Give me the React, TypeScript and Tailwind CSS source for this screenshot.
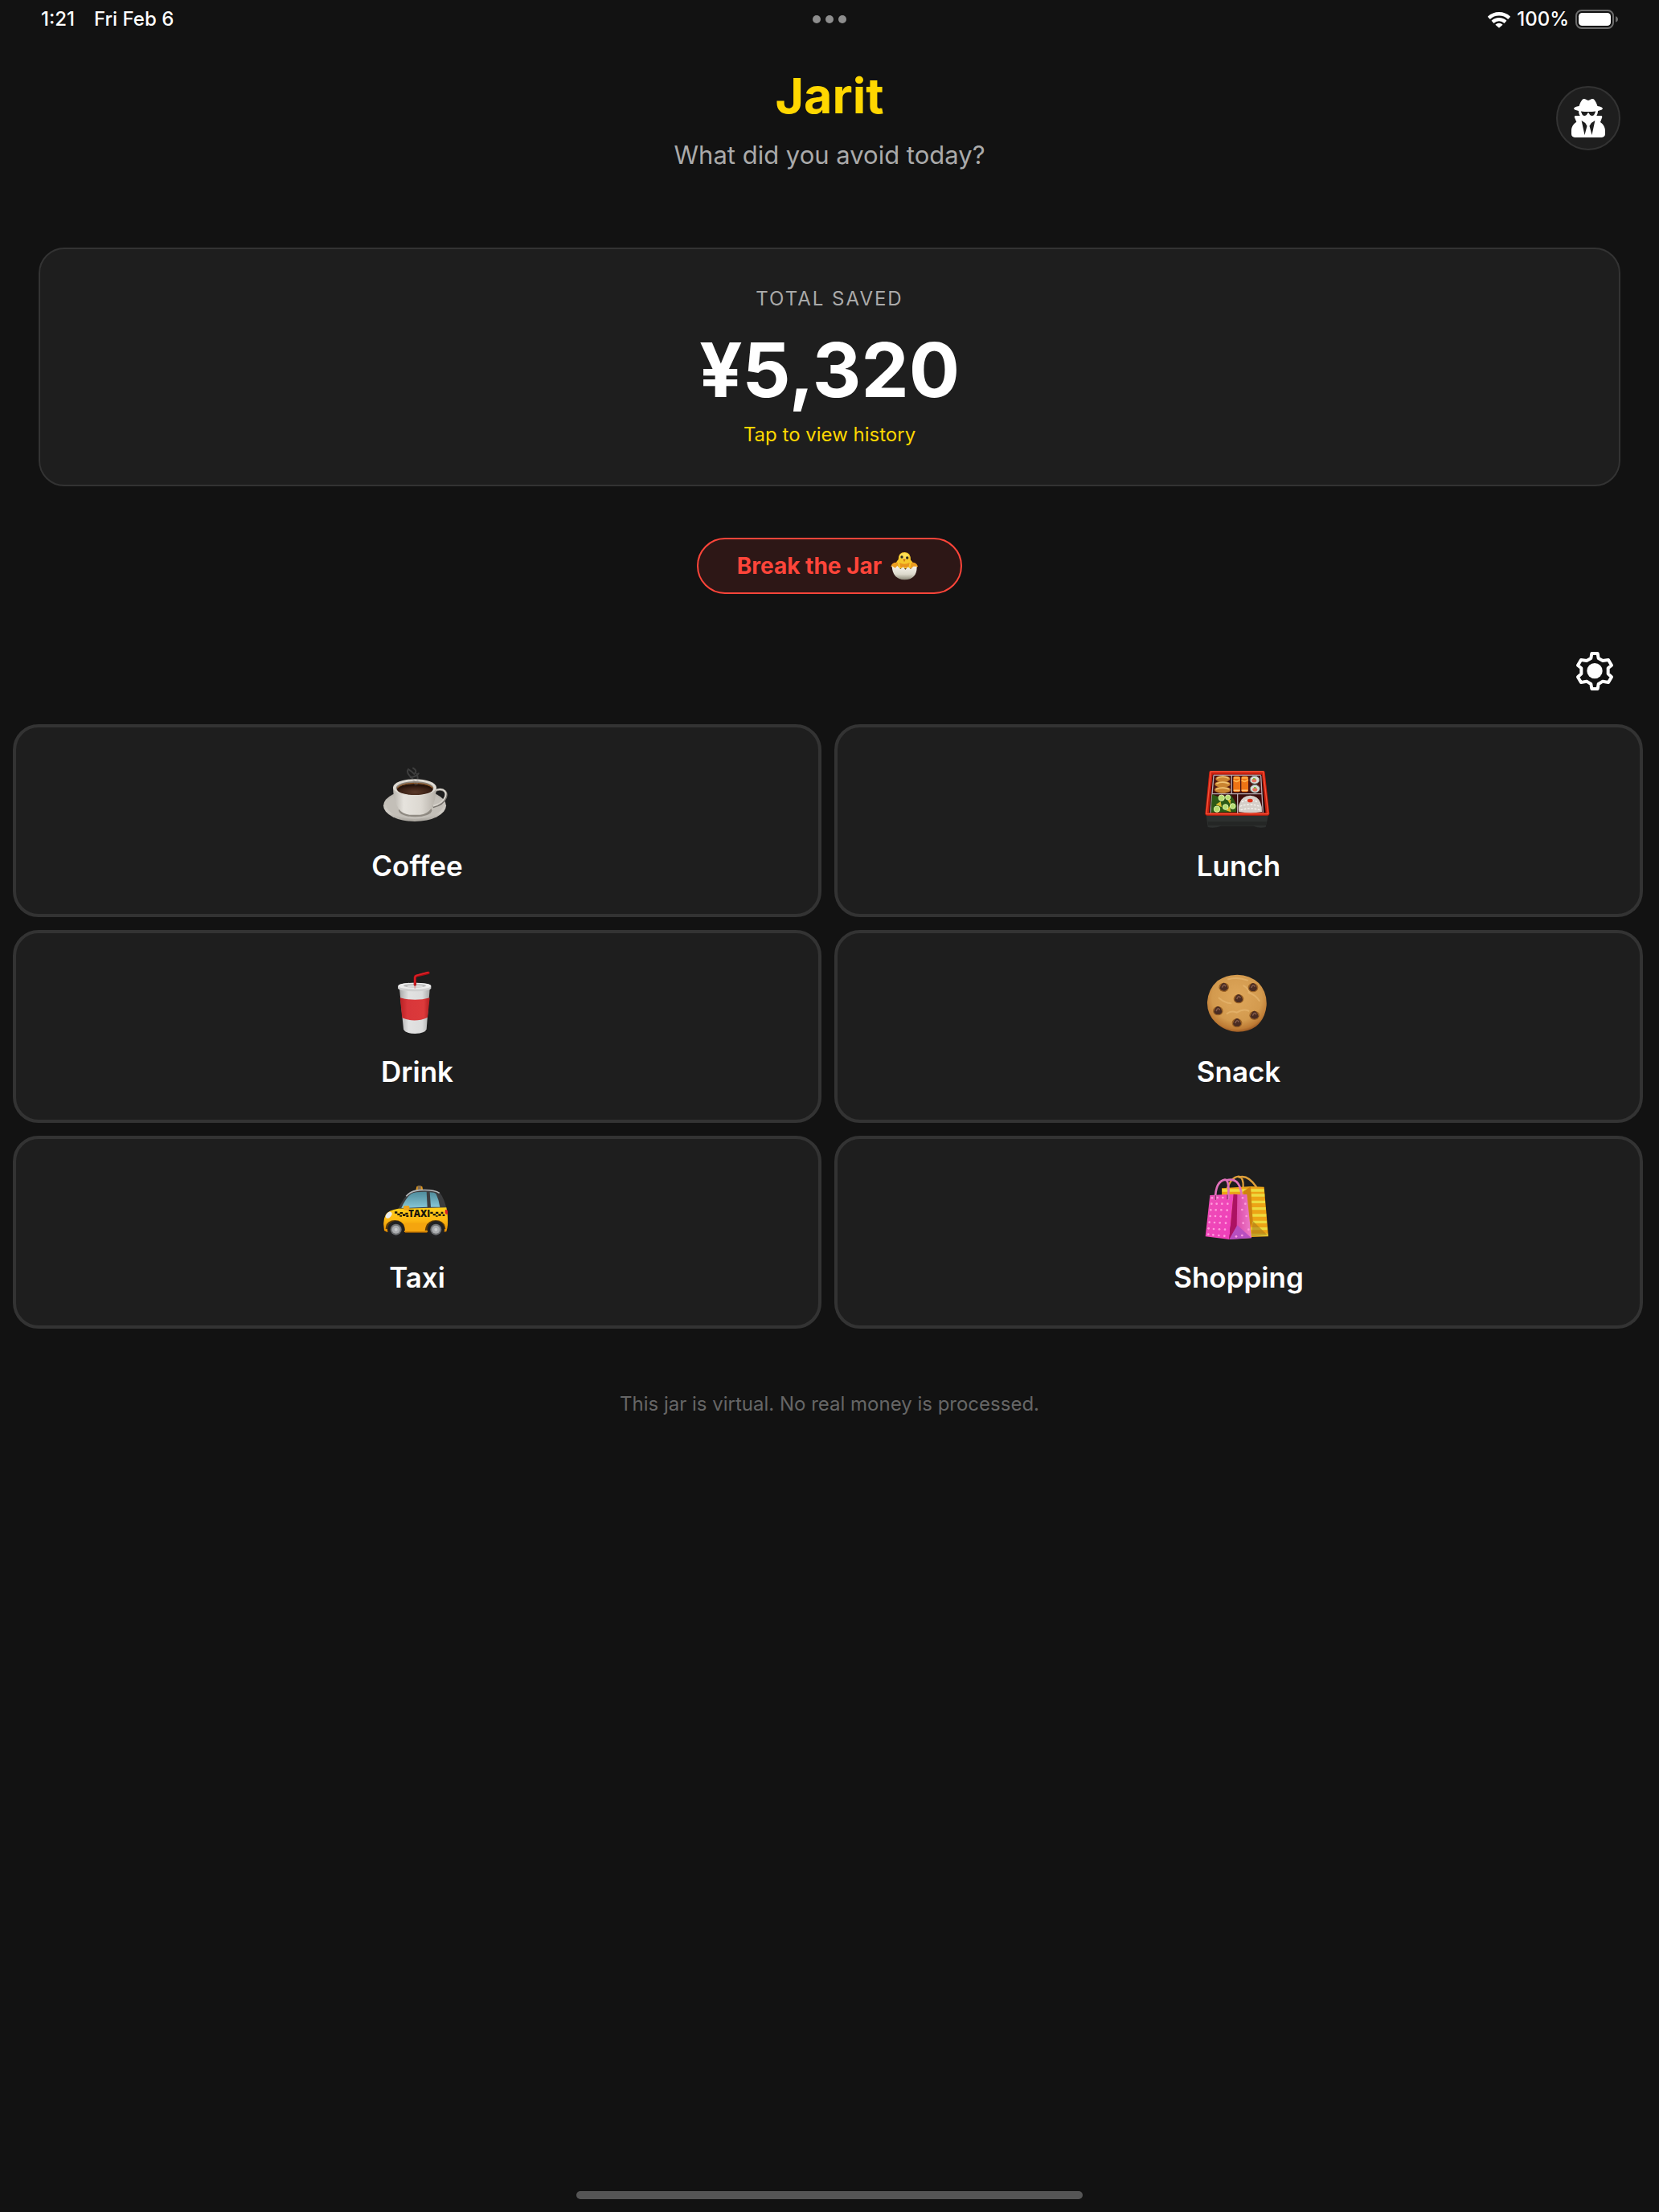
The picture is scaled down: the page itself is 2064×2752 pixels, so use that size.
import type { ReactNode } from "react";
import { FaUserSecret } from "react-icons/fa";

function CoffeeArt() {
  return (
    <svg viewBox="105 18 264 264" className="size-[88px]" aria-hidden="true">
      <defs>
        <linearGradient id="cupBody" x1="0" x2="1" y1="0" y2="0">
          <stop offset="0" stopColor="#b9b5ae" />
          <stop offset="0.25" stopColor="#e6e3dd" />
          <stop offset="0.65" stopColor="#dcd8d1" />
          <stop offset="1" stopColor="#b5b0a8" />
        </linearGradient>
        <linearGradient id="saucer" x1="0" x2="0" y1="0" y2="1">
          <stop offset="0" stopColor="#b3afa8" />
          <stop offset="0.7" stopColor="#d0ccc5" />
          <stop offset="1" stopColor="#a8a49d" />
        </linearGradient>
        <radialGradient id="brew" cx="0.5" cy="0.75" r="0.6">
          <stop offset="0" stopColor="#5b3a2a" />
          <stop offset="0.7" stopColor="#3a2014" />
          <stop offset="1" stopColor="#24120a" />
        </radialGradient>
      </defs>
      <ellipse cx="228" cy="190" rx="117" ry="59" fill="url(#saucer)" />
      <ellipse cx="228" cy="188" rx="106" ry="51" fill="#c3bfb8" />
      <ellipse cx="230" cy="208" rx="62" ry="24" fill="#8f8a82" />
      <path d="M300 138Q316 126 334 132Q350 140 344 158Q334 186 296 194" fill="none" stroke="#77736d" strokeWidth="9" />
      <path d="M300 136Q316 125 333 131Q348 139 342 156Q332 183 296 191" fill="none" stroke="#d8d4cd" strokeWidth="6" />
      <path d="M147 122Q147 168 168 202Q182 222 208 224H248Q274 222 290 200Q308 168 308 122Z" fill="url(#cupBody)" />
      <ellipse cx="228" cy="122" rx="81" ry="31" fill="#dedad3" />
      <ellipse cx="228" cy="124" rx="70" ry="25" fill="#8b8278" />
      <ellipse cx="229" cy="129" rx="67" ry="21" fill="url(#brew)" />
      <path d="M163 124Q180 106 229 106Q278 106 295 124" fill="none" stroke="#8a5222" strokeWidth="4" />
      <path d="M230 112Q226 92 210 80Q196 66 204 54Q218 62 226 72Q240 60 222 50M236 110Q242 88 236 72M212 84Q234 82 242 70" fill="none" stroke="#8c8c8c" strokeOpacity="0.3" strokeWidth="6" strokeLinecap="round" />
    </svg>
  );
}

function BentoArt() {
  return (
    <svg viewBox="111 18 264 264" className="size-[88px]" aria-hidden="true">
      <path d="M122 226L128 270Q150 276 178 266H298Q320 276 344 270L354 226Z" fill="#2d302f" />
      <path d="M128 250L130 264H344L348 250Z" fill="#242625" />
      <path d="M138 60H336Q340 60 341 65L358 220Q358 227 351 227H125Q118 227 118 220L133 65Q134 60 138 60Z" fill="#c81e0e" />
      <path d="M139 63H335L353 218Q353 221 350 221H126Q122 221 123 218Z" fill="none" stroke="#f4553a" strokeWidth="4" />
      <path d="M146 74H330L344 216H132Z" fill="#2a0b0a" />
      <path d="M152 78H214V142H146ZM221 78H324L328 142H221Z" fill="#4d1512" />
      <path d="M144 149H236V216H137ZM242 149H328L334 216H242Z" fill="#3c0d0c" />
      <path d="M150 76L138 217M217 76V145M239 145V218M326 78L334 216M142 146H330M150 76H326" fill="none" stroke="#b9a9b0" strokeWidth="4" />
      <g fill="#c98431">
        <ellipse cx="184" cy="90" rx="27" ry="12" />
        <ellipse cx="183" cy="110" rx="29" ry="12" />
        <ellipse cx="183" cy="131" rx="30" ry="12" />
      </g>
      <g fill="none" stroke="#f0c374" strokeWidth="5" strokeLinecap="round">
        <path d="M164 87Q184 78 204 87M162 107Q183 98 204 107M160 128Q183 119 206 128" />
      </g>
      <g fill="#ee7415">
        <rect x="223" y="80" width="26" height="59" rx="8" />
        <rect x="253" y="80" width="26" height="59" rx="8" />
      </g>
      <path d="M226 96Q236 104 246 94M256 96Q266 104 277 94M227 86H245M257 86H275" fill="none" stroke="#ffb04a" strokeWidth="6" strokeLinecap="round" />
      <path d="M226 133H246M256 133H276" stroke="#ffc277" strokeWidth="5" strokeLinecap="round" />
      <g fill="#d9dfdc" stroke="#5b655f" strokeWidth="3">
        <ellipse cx="303" cy="94" rx="18" ry="15" />
        <ellipse cx="304" cy="127" rx="18" ry="15" />
      </g>
      <g fill="#e5735e">
        <ellipse cx="301" cy="96" rx="9" ry="7" />
        <ellipse cx="304" cy="130" rx="9" ry="7" />
      </g>
      <path d="M297 90h8M300 123h8" stroke="#86b83c" strokeWidth="6" />
      <path d="M144 148L166 156L214 150L226 168L236 190L234 214L140 216Z" fill="#2c5a16" />
      <g fill="#d9bb2e">
        <path d="M158 186L176 174L180 196ZM200 166L214 168L212 186ZM196 208L210 192L214 214Z" />
      </g>
      <g fill="#b5dd70" stroke="#e3f3b0" strokeWidth="3">
        <circle cx="179" cy="161" r="11" />
        <circle cx="203" cy="159" r="9" />
        <circle cx="162" cy="203" r="11" />
        <circle cx="194" cy="195" r="10" />
        <circle cx="221" cy="192" r="10" />
      </g>
      <path d="M244 214Q240 192 248 178Q256 154 286 152Q316 154 324 178Q332 196 330 214Q288 220 244 214Z" fill="#d5cfc9" />
      <g fill="none" stroke="#f6f3ef" strokeWidth="4" strokeLinecap="round" strokeDasharray="5 8">
        <path d="M256 176Q280 160 318 178M250 192Q286 178 324 194M252 206Q290 194 326 208" />
      </g>
      <ellipse cx="286" cy="171" rx="10" ry="7" fill="#e2331c" />
    </svg>
  );
}

function DrinkArt() {
  return (
    <svg viewBox="105 36 264 264" className="size-[88px]" aria-hidden="true">
      <defs>
        <linearGradient id="paperCup" x1="0" x2="1" y1="0" y2="0">
          <stop offset="0" stopColor="#a9a9a9" />
          <stop offset="0.3" stopColor="#e2e2e2" />
          <stop offset="0.75" stopColor="#dcdcdc" />
          <stop offset="1" stopColor="#a8a8a8" />
        </linearGradient>
        <linearGradient id="sleeve" x1="0" x2="1" y1="0" y2="0">
          <stop offset="0" stopColor="#b82023" />
          <stop offset="0.25" stopColor="#d8363a" />
          <stop offset="0.8" stopColor="#dc3a3b" />
          <stop offset="1" stopColor="#b11d20" />
        </linearGradient>
      </defs>
      <path d="M171 124L186 274Q190 290 229 291Q268 290 272 274L284 124Z" fill="url(#paperCup)" />
      <path d="M173 157Q229 172 284 157L276 230Q229 252 181 232Z" fill="url(#sleeve)" />
      <path d="M165 114Q167 102 228 101Q286 102 289 114V122Q284 132 228 133Q170 132 165 122Z" fill="#cfcfcf" />
      <ellipse cx="228" cy="113" rx="61" ry="12" fill="#ececec" />
      <ellipse cx="228" cy="112" rx="42" ry="7" fill="#b9b9b9" />
      <ellipse cx="229" cy="114" rx="30" ry="5" fill="#dadada" />
      <path d="M229 109V82Q229 76 236 75L279 64" fill="none" stroke="#a90d12" strokeWidth="10" strokeLinecap="round" strokeLinejoin="round" />
      <path d="M228 107V82Q229 75 236 73L278 62" fill="none" stroke="#da2027" strokeWidth="5" strokeLinecap="round" />
      <path d="M229 112V122" stroke="#d9a3a3" strokeWidth="6" />
    </svg>
  );
}

function Chip({ x, y }: { x: number; y: number }) {
  return (
    <g>
      <ellipse cx={x} cy={y + 2} rx="19" ry="17" fill="#9a6226" />
      <path d={`M${x - 15} ${y + 5}Q${x - 10} ${y - 14} ${x} ${y - 15}Q${x + 11} ${y - 13} ${x + 15} ${y + 5}Q${x + 12} ${y + 15} ${x} ${y + 15}Q${x - 12} ${y + 15} ${x - 15} ${y + 5}Z`} fill="#4a2c22" />
      <path d={`M${x - 6} ${y + 1}Q${x} ${y - 12} ${x + 6} ${y - 3}`} fill="none" stroke="#80594a" strokeWidth="5" strokeLinecap="round" />
    </g>
  );
}

function CookieArt() {
  return (
    <svg viewBox="111 36 264 264" className="size-[88px]" aria-hidden="true">
      <defs>
        <radialGradient id="cookie" cx="0.5" cy="0.4" r="0.6">
          <stop offset="0" stopColor="#dea75b" />
          <stop offset="0.7" stopColor="#d39a4e" />
          <stop offset="0.92" stopColor="#bd7a34" />
          <stop offset="1" stopColor="#9c5a24" />
        </radialGradient>
      </defs>
      <path d="M238 71Q286 72 318 102Q350 136 347 186Q342 236 308 264Q276 286 236 284Q190 282 158 250Q124 218 126 172Q130 124 164 94Q196 71 238 71Z" fill="url(#cookie)" />
      <path d="M204 88Q240 78 276 92M280 138Q306 146 320 168M170 158Q190 176 214 178M200 216Q214 204 236 212Q262 196 280 206M262 112Q280 122 284 140" fill="none" stroke="#eabb74" strokeOpacity="0.6" strokeWidth="6" strokeLinecap="round" />
      <Chip x={188} y={116} />
      <Chip x={297} y={117} />
      <Chip x={243} y={159} />
      <Chip x={166} y={204} />
      <Chip x={302} y={221} />
      <Chip x={237} y={249} />
    </svg>
  );
}

function TaxiArt() {
  return (
    <svg viewBox="105 24 264 264" className="size-[88px]" aria-hidden="true">
      <defs>
        <linearGradient id="taxiBody" x1="0" x2="0" y1="0" y2="1">
          <stop offset="0" stopColor="#ffcf1a" />
          <stop offset="0.5" stopColor="#fdb813" />
          <stop offset="1" stopColor="#e58a00" />
        </linearGradient>
        <linearGradient id="taxiGlass" x1="0" x2="0" y1="0" y2="1">
          <stop offset="0" stopColor="#4f8c9c" />
          <stop offset="1" stopColor="#86c6d6" />
        </linearGradient>
      </defs>
      <path d="M232 96L235 82Q245 76 256 82L259 96Z" fill="#e59a1b" />
      <rect x="239" y="79" width="12" height="16" rx="3" fill="#806c54" />
      <path d="M164 170Q184 124 210 102Q226 92 262 92Q306 92 322 104Q340 130 348 170Z" fill="#3b3c3e" />
      <path d="M196 118Q212 98 246 95Q300 92 320 106" fill="none" stroke="#b3b6b8" strokeWidth="5" />
      <path d="M178 162Q196 122 216 108Q230 100 272 101L275 158Z" fill="url(#taxiGlass)" />
      <path d="M284 103Q302 103 308 110Q318 130 322 158H288Z" fill="url(#taxiGlass)" />
      <path d="M112 226Q110 204 120 186Q130 170 166 164L346 160Q352 186 351 210Q352 232 346 250Q320 254 300 252H150Q126 256 114 246Z" fill="url(#taxiBody)" />
      <path d="M190 218H274V250H190Z" fill="#f5a50e" />
      <path d="M192 252H274" stroke="#b56b00" strokeWidth="4" />
      <rect x="186" y="153" width="22" height="17" rx="5" fill="#eda51b" />
      <ellipse cx="131" cy="188" rx="9" ry="14" transform="rotate(42 131 188)" fill="#e9ecee" />
      <path d="M342 168Q351 166 351 176L350 186Q342 186 341 178Z" fill="#dc2127" />
      <g fill="#19160c">
        <path d="M153 175h10v7h-10zM173 177h10v7h-10zM193 179h10v7h-10zM163 182h10v7h-10zM183 184h10v8h-10zM172 189h8v5h-8zM196 188h9v7h-9z" />
        <path d="M286 176h10v7h-10zM306 176h10v7h-10zM326 176h8v7h-8zM296 183h10v7h-10zM316 184h10v7h-10zM332 185h8v7h-8zM306 190h8v4h-8z" />
      </g>
      <text x="245" y="196" textAnchor="middle" fontFamily="Open Sans, sans-serif" fontWeight="800" fontSize="34" fill="#19160c">TAXI</text>
      <path d="M119 240Q120 208 154 207Q190 208 192 246ZM266 246Q270 208 306 207Q340 208 343 240Z" fill="#5c3b08" />
      {[158, 307].map((cx) => (
        <g key={cx}>
          <circle cx={cx} cy="242" r="32" fill="#202022" />
          <circle cx={cx} cy="242" r="21" fill="#6f7174" />
          <circle cx={cx} cy="242" r="15" fill="#a9abae" />
          <circle cx={cx} cy="242" r="6" fill="#c9cbcd" />
        </g>
      ))}
    </svg>
  );
}

function BagsArt() {
  const dots = [
    [174, 124], [194, 123], [214, 123], [234, 122],
    [172, 146], [191, 146], [211, 146], [232, 146],
    [169, 169], [188, 169], [208, 169], [230, 170],
    [167, 192], [186, 192], [206, 193], [227, 194],
    [164, 215], [183, 216], [203, 217], [225, 218],
    [161, 238], [180, 240], [201, 241], [222, 242],
    [160, 260], [178, 262], [199, 264], [220, 266],
    [288, 124], [298, 146], [286, 168], [302, 192], [290, 218], [310, 242], [286, 264], [264, 268],
  ];
  return (
    <svg viewBox="141 24 264 264" className="size-[88px]" aria-hidden="true">
      <defs>
        <linearGradient id="pinkFront" x1="0" x2="1" y1="0" y2="1">
          <stop offset="0" stopColor="#ee4fb6" />
          <stop offset="1" stopColor="#f03dbb" />
        </linearGradient>
        <linearGradient id="pinkSide" x1="0" x2="1" y1="0" y2="0">
          <stop offset="0" stopColor="#b3186f" />
          <stop offset="0.35" stopColor="#dc4ba8" />
          <stop offset="1" stopColor="#ee7cc9" />
        </linearGradient>
      </defs>
      <path d="M210 88L318 81L368 83L384 268L320 270L212 200Z" fill="#eda416" />
      <path d="M212 96H368M320 114H370M320 139H372M320 164H374M320 189H376M320 214H378M320 239H380M320 262H382" stroke="#eddb3f" strokeWidth="10" />
      <path d="M318 82L326 212L316 240L290 100Z" fill="#cf8210" />
      <path d="M326 210L382 264L320 268Z" fill="#a87c18" fillOpacity="0.6" />
      <path d="M230 92Q244 46 274 44Q292 48 290 84M272 48Q306 34 340 84" fill="none" stroke="#e0a03a" strokeWidth="7" />
      <path d="M166 114L254 110L238 279L149 268Z" fill="url(#pinkFront)" />
      <path d="M254 110L304 111L321 274L238 279Z" fill="url(#pinkSide)" />
      <path d="M254 110L268 112L266 230L238 279Z" fill="#ad1263" />
      <path d="M268 226L320 273L238 279Z" fill="#b74fc0" />
      <g fill="#ff9bdc">
        {dots.map(([cx, cy]) => (
          <circle key={`${cx}-${cy}`} cx={cx} cy={cy} r="4" />
        ))}
      </g>
      <path d="M186 130Q186 62 222 56Q240 56 234 128M228 58Q276 44 284 112" fill="none" stroke="#e070b9" strokeWidth="8" strokeLinecap="round" />
      <path d="M187 116V130M231 114V128" stroke="#8e2a69" strokeWidth="4" strokeLinecap="round" />
    </svg>
  );
}

function ChickArt() {
  return (
    <svg viewBox="802 108 108 108" className="-my-px size-9" aria-hidden="true">
      <defs>
        <linearGradient id="shell" x1="0" x2="0" y1="0" y2="1">
          <stop offset="0" stopColor="#f7f5ee" />
          <stop offset="0.6" stopColor="#dcd9cc" />
          <stop offset="1" stopColor="#8f8c7c" />
        </linearGradient>
      </defs>
      <path d="M834 138Q834 111 858 111Q880 112 880 140Q892 150 896 172H820Q822 150 834 138Z" fill="#f6c72b" />
      <path d="M806 164Q812 146 832 150L836 172Q818 174 806 164ZM907 164Q900 146 882 150L878 172Q896 174 907 164Z" fill="#eb9d20" />
      <path d="M838 150Q856 160 876 150L872 168H842Z" fill="#e8941c" />
      <ellipse cx="856" cy="126" rx="17" ry="12" fill="#ffdf55" />
      <path d="M810 162L822 170L830 162L842 174L852 166L860 176L870 166L880 174L890 164L903 164Q904 212 857 214Q812 212 810 162Z" fill="url(#shell)" />
      <circle cx="847" cy="129" r="5" fill="#2d2a20" />
      <circle cx="867" cy="132" r="5" fill="#2d2a20" />
      <path d="M851 136L861 137L856 148Z" fill="#c96f12" />
    </svg>
  );
}

function GearIcon() {
  return (
    <svg viewBox="120 96 144 144" className="size-12" aria-hidden="true">
      <path
        d="M181 102H203L206 120L222 129L243 126L255 146L242 157V178L255 190L243 210L222 206L206 216L203 234H181L178 216L162 206L141 210L129 190L142 178V157L129 146L141 126L162 129L178 120Z"
        fill="none"
        stroke="#fff"
        strokeWidth="12"
        strokeLinejoin="round"
      />
      <circle cx="192" cy="167" r="29" fill="#fff" />
    </svg>
  );
}

function WifiIcon() {
  return (
    <svg viewBox="147 41 84 63" className="h-[21px] w-7" aria-hidden="true">
      <g fill="none" stroke="#fff" strokeWidth="13">
        <path d="M151 66A55 55 0 0 1 227 66" />
        <path d="M165 81A35 35 0 0 1 213 81" />
      </g>
      <path d="M189 103L175 91A20 20 0 0 1 203 91Z" fill="#fff" />
    </svg>
  );
}

function BatteryIcon() {
  return (
    <svg viewBox="477 36 159 72" className="h-6 w-[53px]" aria-hidden="true">
      <rect x="480" y="39" width="138" height="66" rx="20" fill="none" stroke="#6d6d6d" strokeWidth="6" />
      <rect x="489" y="48" width="120" height="48" rx="13" fill="#fff" />
      <path d="M627 61Q636 64 636 72Q636 80 627 83Z" fill="#6d6d6d" />
    </svg>
  );
}

const categories: { name: string; art: ReactNode }[] = [
  { name: "Coffee", art: <CoffeeArt /> },
  { name: "Lunch", art: <BentoArt /> },
  { name: "Drink", art: <DrinkArt /> },
  { name: "Snack", art: <CookieArt /> },
  { name: "Taxi", art: <TaxiArt /> },
  { name: "Shopping", art: <BagsArt /> },
];

export default function App() {
  return (
    <div className="flex min-h-screen flex-col bg-[#121212] font-['Inter',sans-serif] text-white">
      <div className="grid h-12 grid-cols-3 items-center px-[51px] text-2xl leading-7 font-medium">
        <div className="flex gap-6">
          <span>1:21</span>
          <span>Fri Feb 6</span>
        </div>
        <div className="flex justify-center gap-1.5">
          <span className="size-2.5 rounded-full bg-[#8e8e8e]" />
          <span className="size-2.5 rounded-full bg-[#8e8e8e]" />
          <span className="size-2.5 rounded-full bg-[#8e8e8e]" />
        </div>
        <div className="flex items-center justify-end gap-2">
          <WifiIcon />
          <span>100%</span>
          <BatteryIcon />
        </div>
      </div>

      <header className="mt-8 grid grid-cols-[80px_1fr_80px] items-center px-12">
        <div className="col-start-2 text-center">
          <h1 className="text-[61px] leading-[78px] font-bold text-[#ffd700]">Jarit</h1>
          <p className="mt-[14px] text-[31px] leading-[42px] text-[#aaaaaa]">What did you avoid today?</p>
        </div>
        <button
          type="button"
          aria-label="Profile"
          className="flex size-20 items-center justify-center rounded-full border-2 border-[#333333] bg-[#1e1e1e]"
        >
          <FaUserSecret className="h-12 w-[42px]" />
        </button>
      </header>

      <main className="flex flex-col">
        <button
          type="button"
          className="mx-12 mt-[94px] flex flex-col items-center rounded-[32px] border-2 border-[#333333] bg-[#1e1e1e] py-12"
        >
          <span className="text-2xl leading-7 tracking-[2px] text-[#aaaaaa] uppercase">Total saved</span>
          <span className="mt-4 text-[94px] leading-[117px] font-bold">¥5,320</span>
          <span className="mt-2 text-2xl leading-7 text-[#ffd700]">Tap to view history</span>
        </button>

        <button
          type="button"
          className="mt-16 flex items-center gap-2.5 self-center rounded-full border-2 border-[#ff453a] bg-[#2d1716] py-4 pr-[52px] pl-12 text-[28px] leading-[34px] font-bold text-[#ff453a]"
        >
          Break the Jar
          <ChickArt />
        </button>

        <button
          type="button"
          aria-label="Settings"
          className="mt-14 mr-10 flex size-20 items-center justify-center self-end"
        >
          <GearIcon />
        </button>

        <div className="mt-[26px] mr-5 ml-4 grid grid-cols-2 gap-4">
          {categories.map(({ name, art }) => (
            <button
              key={name}
              type="button"
              className="flex flex-col items-center gap-[22px] rounded-[32px] border-4 border-[#333333] bg-[#1e1e1e] pt-10 pb-[38px] text-[35px] leading-[44px] font-semibold"
            >
              {art}
              {name}
            </button>
          ))}
        </div>

        <p className="mt-20 text-center text-2xl leading-7 text-[#666666]">
          This jar is virtual. No real money is processed.
        </p>
      </main>

      <div className="mt-auto mb-4 h-2.5 w-[630px] self-center rounded-full bg-[#555555]" />
    </div>
  );
}
